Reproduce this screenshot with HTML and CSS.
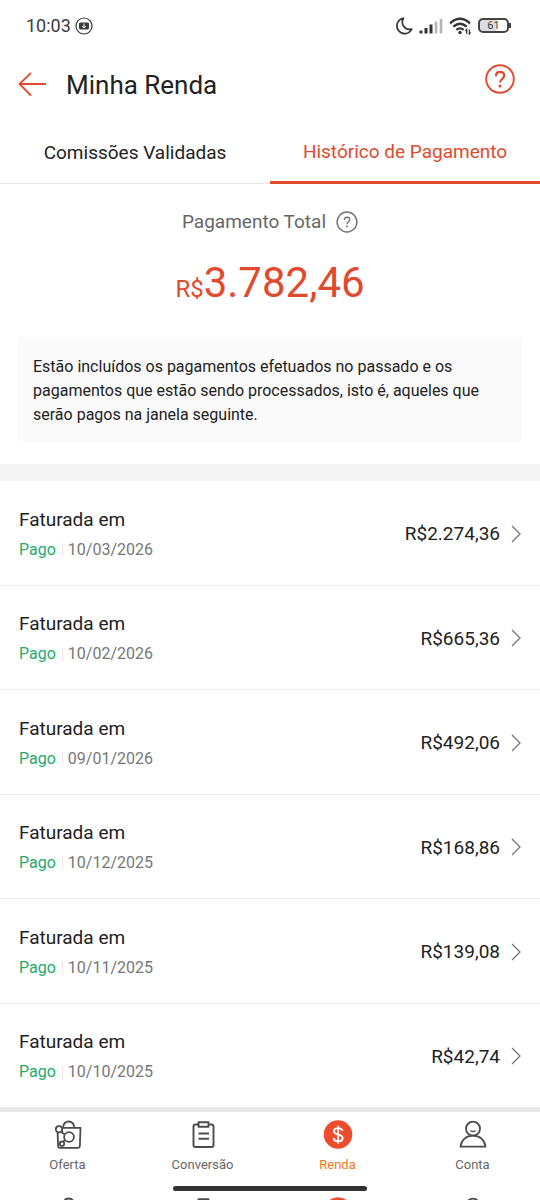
FILE: index.html
```html
<!DOCTYPE html>
<html lang="pt-BR">
<head>
<meta charset="utf-8">
<meta name="viewport" content="width=device-width, initial-scale=1">
<title>Minha Renda</title>
<link rel="stylesheet" href="styles.css">
</head>
<body>
<svg class="defs" aria-hidden="true">
  <symbol id="chevron" viewBox="0 0 10 18"><path d="M1 1l8 8-8 8" fill="none" stroke="#777" stroke-width="1.3"/></symbol>
  <symbol id="bag" viewBox="0 0 30 32">
    <g fill="none" stroke="#4c4c4c" stroke-width="1.8" stroke-linejoin="round">
      <path d="M10 8.500C10.500 4.500 12.600 2.500 15.600 2.500s5.200 2 5.800 6"/>
      <path d="M9.200 8.800h18.300l-.6 18q-.1 2-2 2H7Q5.200 28.800 5.100 27L4.600 13.600"/>
      <circle cx="6" cy="10.300" r="3.200"/><circle cx="16" cy="18" r="4.900"/><circle cx="9" cy="24.700" r="2.200"/>
      <path d="M9.300 12v2l2.500 1.300M11.800 20.800l-1.500 2"/>
    </g>
  </symbol>
  <symbol id="clipboard" viewBox="0 0 30 32">
    <g fill="none" stroke="#4c4c4c" stroke-width="1.900" stroke-linejoin="round">
      <path d="M10.500 5.500H7.500Q5.500 5.500 5.500 7.500v18.500q0 2 2 2h16q2 0 2-2V7.500q0-2-2-2h-3"/>
      <path d="M10.500 3.300h10v4.400h-10zM10.500 14.500h10.500M10.500 19.800h10.500"/>
    </g>
  </symbol>
  <symbol id="coin" viewBox="0 0 30 32">
    <circle cx="15" cy="15.500" r="14.300" fill="#ee4d2d"/>
    <path d="M19.400 11.900C19 10 17.400 9.100 15.200 9.100c-2.400 0-4.200 1.200-4.200 3.200 0 4.500 8.600 2.300 8.600 6.700 0 2.200-1.900 3.400-4.400 3.400-2.600 0-4.400-1.300-4.600-3.500M15.200 6.800v18" fill="none" stroke="#fff" stroke-width="1.900"/>
  </symbol>
  <symbol id="person" viewBox="0 0 30 32">
    <g fill="none" stroke="#4c4c4c" stroke-width="1.800" stroke-linejoin="round">
      <circle cx="15" cy="9.700" r="7"/><path d="M12.500 11.500q2.500 2.200 5 0" stroke-width="1.400"/>
      <path d="M2.500 27.700c.8-6.700 5.700-11 12.500-11s11.700 4.300 12.500 11z"/>
    </g>
  </symbol>
</svg>

<div class="status">
  <div class="status-side">
    <span>10:03</span>
    <svg width="18" height="18" viewBox="0 0 18 18"><circle cx="9" cy="9" r="8" fill="none" stroke="#3c3c3c" stroke-width="1.200"/><rect x="4" y="5.500" width="10" height="7" rx="1.500" fill="#3c3c3c"/><path d="M9 6.500v4M7.200 9L9 11l1.800-2" fill="none" stroke="#fff" stroke-width="1"/></svg>
  </div>
  <div class="status-side status-icons">
    <svg width="18" height="18" viewBox="0 0 18 18"><path d="M8.500 1.300A7.700 7.700 0 1 0 16.700 12 7.200 7.200 0 0 1 8.500 1.300z" fill="none" stroke="#333" stroke-width="1.700" stroke-linejoin="round"/></svg>
    <svg width="24" height="18" viewBox="0 0 24 18"><path d="M2 13.500v3M7 11v5.500M12 7.500v9" stroke="#333" stroke-width="3"/><path d="M17 4.500v12M22 2v14.500" stroke="#b5b5b5" stroke-width="2.600"/></svg>
    <svg width="23" height="18" viewBox="0 0 23 18"><g fill="none" stroke="#333" stroke-width="2.300"><path d="M1 6.300q10-9 20 0M4.300 9.700q6.700-6 13.400 0M7.300 12.900q3.700-3 7.400 0"/></g><circle cx="11" cy="15.500" r="1.700" fill="#333"/><path d="M17.700 17v-4.500l-1.300 1.600M20.300 12.500V17l1.300-1.600" fill="none" stroke="#333" stroke-width="1.200"/></svg>
    <span class="battery">61</span>
  </div>
</div>

<header class="header">
  <button class="icon-button" aria-label="Voltar"><svg width="30" height="26" viewBox="0 0 30 26"><path d="M29 12H2.500M14 .8L2.500 12 14 23.500" fill="none" stroke="#e04a2e" stroke-width="1.800"/></svg></button>
  <h1 class="title">Minha Renda</h1>
  <button class="icon-button help" aria-label="Ajuda"><svg width="32" height="32" viewBox="0 0 32 32"><circle cx="16" cy="16" r="13.800" fill="none" stroke="#e04a2e" stroke-width="1.900"/><path d="M12 13.200c0-2.600 1.600-4.300 4.100-4.300s4.100 1.400 4.100 3.700c0 3.300-4.200 3.500-4.200 6.900" fill="none" stroke="#e04a2e" stroke-width="2.200"/><circle cx="16" cy="23" r="1.500" fill="#e04a2e"/></svg></button>
</header>

<nav class="tabs">
  <a class="tab" href="#comissoes">Comissões Validadas</a>
  <a class="tab active" href="#historico" aria-current="page">Histórico de Pagamento</a>
</nav>

<section class="summary">
  <div class="summary-label">Pagamento Total
    <button class="icon-button" aria-label="Sobre o pagamento total"><svg width="22" height="22" viewBox="0 0 22 22"><circle cx="11" cy="11" r="9.900" fill="none" stroke="#757575" stroke-width="1.500"/><path d="M8.400 9c0-1.700 1.100-2.700 2.700-2.700s2.600.9 2.600 2.300c0 2.200-2.700 2.200-2.700 4.600" fill="none" stroke="#757575" stroke-width="1.400"/><circle cx="11" cy="15.500" r="1" fill="#757575"/></svg></button>
  </div>
  <div class="total"><span class="currency">R$</span>3.782,46</div>
  <p class="note">Estão incluídos os pagamentos efetuados no passado e os pagamentos que estão sendo processados, isto é, aqueles que serão pagos na janela seguinte.</p>
</section>

<main class="list">
  <a class="row" href="#p1"><div><div class="name">Faturada em</div><div class="meta"><span class="paid">Pago</span><time>10/03/2026</time></div></div><span class="amount">R$2.274,36</span><svg class="chevron"><use href="#chevron"/></svg></a>
  <a class="row" href="#p2"><div><div class="name">Faturada em</div><div class="meta"><span class="paid">Pago</span><time>10/02/2026</time></div></div><span class="amount">R$665,36</span><svg class="chevron"><use href="#chevron"/></svg></a>
  <a class="row" href="#p3"><div><div class="name">Faturada em</div><div class="meta"><span class="paid">Pago</span><time>09/01/2026</time></div></div><span class="amount">R$492,06</span><svg class="chevron"><use href="#chevron"/></svg></a>
  <a class="row" href="#p4"><div><div class="name">Faturada em</div><div class="meta"><span class="paid">Pago</span><time>10/12/2025</time></div></div><span class="amount">R$168,86</span><svg class="chevron"><use href="#chevron"/></svg></a>
  <a class="row" href="#p5"><div><div class="name">Faturada em</div><div class="meta"><span class="paid">Pago</span><time>10/11/2025</time></div></div><span class="amount">R$139,08</span><svg class="chevron"><use href="#chevron"/></svg></a>
  <a class="row" href="#p6"><div><div class="name">Faturada em</div><div class="meta"><span class="paid">Pago</span><time>10/10/2025</time></div></div><span class="amount">R$42,74</span><svg class="chevron"><use href="#chevron"/></svg></a>
</main>

<nav class="bottom">
  <a class="item" href="#oferta"><svg class="item-icon"><use href="#bag"/></svg>Oferta</a>
  <a class="item" href="#conversao"><svg class="item-icon"><use href="#clipboard"/></svg>Conversão</a>
  <a class="item current" href="#renda" aria-current="page"><svg class="item-icon"><use href="#coin"/></svg>Renda</a>
  <a class="item" href="#conta"><svg class="item-icon"><use href="#person"/></svg>Conta</a>
</nav>
<div class="home"></div>
<div class="peek" aria-hidden="true">
  <svg class="item-icon"><use href="#bag"/></svg>
  <svg class="item-icon"><use href="#clipboard"/></svg>
  <svg class="item-icon"><use href="#coin"/></svg>
  <svg class="item-icon"><use href="#person"/></svg>
</div>
</body>
</html>
```
FILE: styles.css
```css
* { box-sizing: border-box; }
body {
  margin: 0;
  min-height: 100vh;
  display: flex;
  flex-direction: column;
  background: #fff;
  color: #222;
  font-family: Roboto, "Liberation Sans", sans-serif;
}
a { color: inherit; text-decoration: none; }
svg { display: block; flex: none; }
.defs { position: absolute; width: 0; height: 0; }

.status {
  display: flex;
  justify-content: space-between;
  align-items: center;
  height: 51px;
  padding: 0 31px 0 26px;
  font-size: 18px;
  color: #3c3c3c;
}
.status-side { display: flex; align-items: center; gap: 4px; }
.status-icons { gap: 6px; }
.battery {
  position: relative;
  width: 31px;
  height: 15px;
  border: 2px solid #444;
  border-radius: 5px;
  background: linear-gradient(90deg, #ddd 60%, #fff 60%);
  font-size: 11px;
  line-height: 12px;
  text-align: center;
}
.battery::after {
  content: "";
  position: absolute;
  right: -4px;
  top: 3px;
  width: 2px;
  height: 5px;
  background: #444;
}

.icon-button { padding: 0; border: 0; background: none; }
.header {
  display: flex;
  align-items: center;
  height: 69px;
  padding: 0 24px 2px 17px;
}
.title { flex: 1; margin: 0 0 0 19px; font-size: 26px; line-height: 32px; font-weight: 400; }
.help { padding-bottom: 12px; }

.tabs { display: grid; grid-template-columns: 1fr 1fr; height: 64px; }
.tab {
  display: flex;
  align-items: center;
  justify-content: center;
  padding-top: 2px;
  border-bottom: 1px solid #e8e8e8;
  font-size: 19px;
}
.tab.active { color: #e04a2e; border-bottom: 3px solid #e04a2e; }

.summary { padding: 24px 18px 23px; border-bottom: 17px solid #f4f4f4; }
.summary-label {
  display: flex;
  justify-content: center;
  align-items: center;
  gap: 10px;
  font-size: 19px;
  line-height: 28px;
  color: #666;
}
.total { margin-top: 21px; text-align: center; font-size: 42px; line-height: 52px; color: #e04a2e; }
.currency { font-size: 24px; }
.note {
  margin: 22px 0 0;
  padding: 18px 15px 14px;
  background: #fafafa;
  font-size: 16px;
  line-height: 24px;
}

.list { flex: 1; display: flex; flex-direction: column; }
.row {
  flex: 1;
  display: flex;
  align-items: center;
  padding: 2px 19px 0;
  border-bottom: 1px solid #ececec;
}
.row:last-child { border-bottom: 0; }
.name { font-size: 19px; line-height: 28px; }
.meta { display: flex; align-items: center; margin-top: 4px; font-size: 16px; line-height: 24px; color: #777; }
.paid { color: #26aa6a; }
.meta time { margin-left: 6px; padding-left: 6px; background: linear-gradient(#e8e8e8, #e8e8e8) left center / 1px 13px no-repeat; }
.amount { margin-left: auto; font-size: 19px; }
.chevron { width: 10px; height: 18px; margin-left: 11px; }

.bottom, .peek { display: grid; grid-template-columns: repeat(4, 1fr); }
.bottom { border-top: 5px solid #e8e8e8; padding-top: 7px; }
.item { display: flex; flex-direction: column; align-items: center; gap: 5px; font-size: 13px; line-height: 18px; color: #666; }
.current { color: #ee7a1a; }
.item-icon { width: 30px; height: 32px; }
.home { width: 194px; height: 5px; margin: 12px auto 5px; border-radius: 3px; background: #333; }
.peek { height: 4px; overflow: hidden; justify-items: center; }
```
